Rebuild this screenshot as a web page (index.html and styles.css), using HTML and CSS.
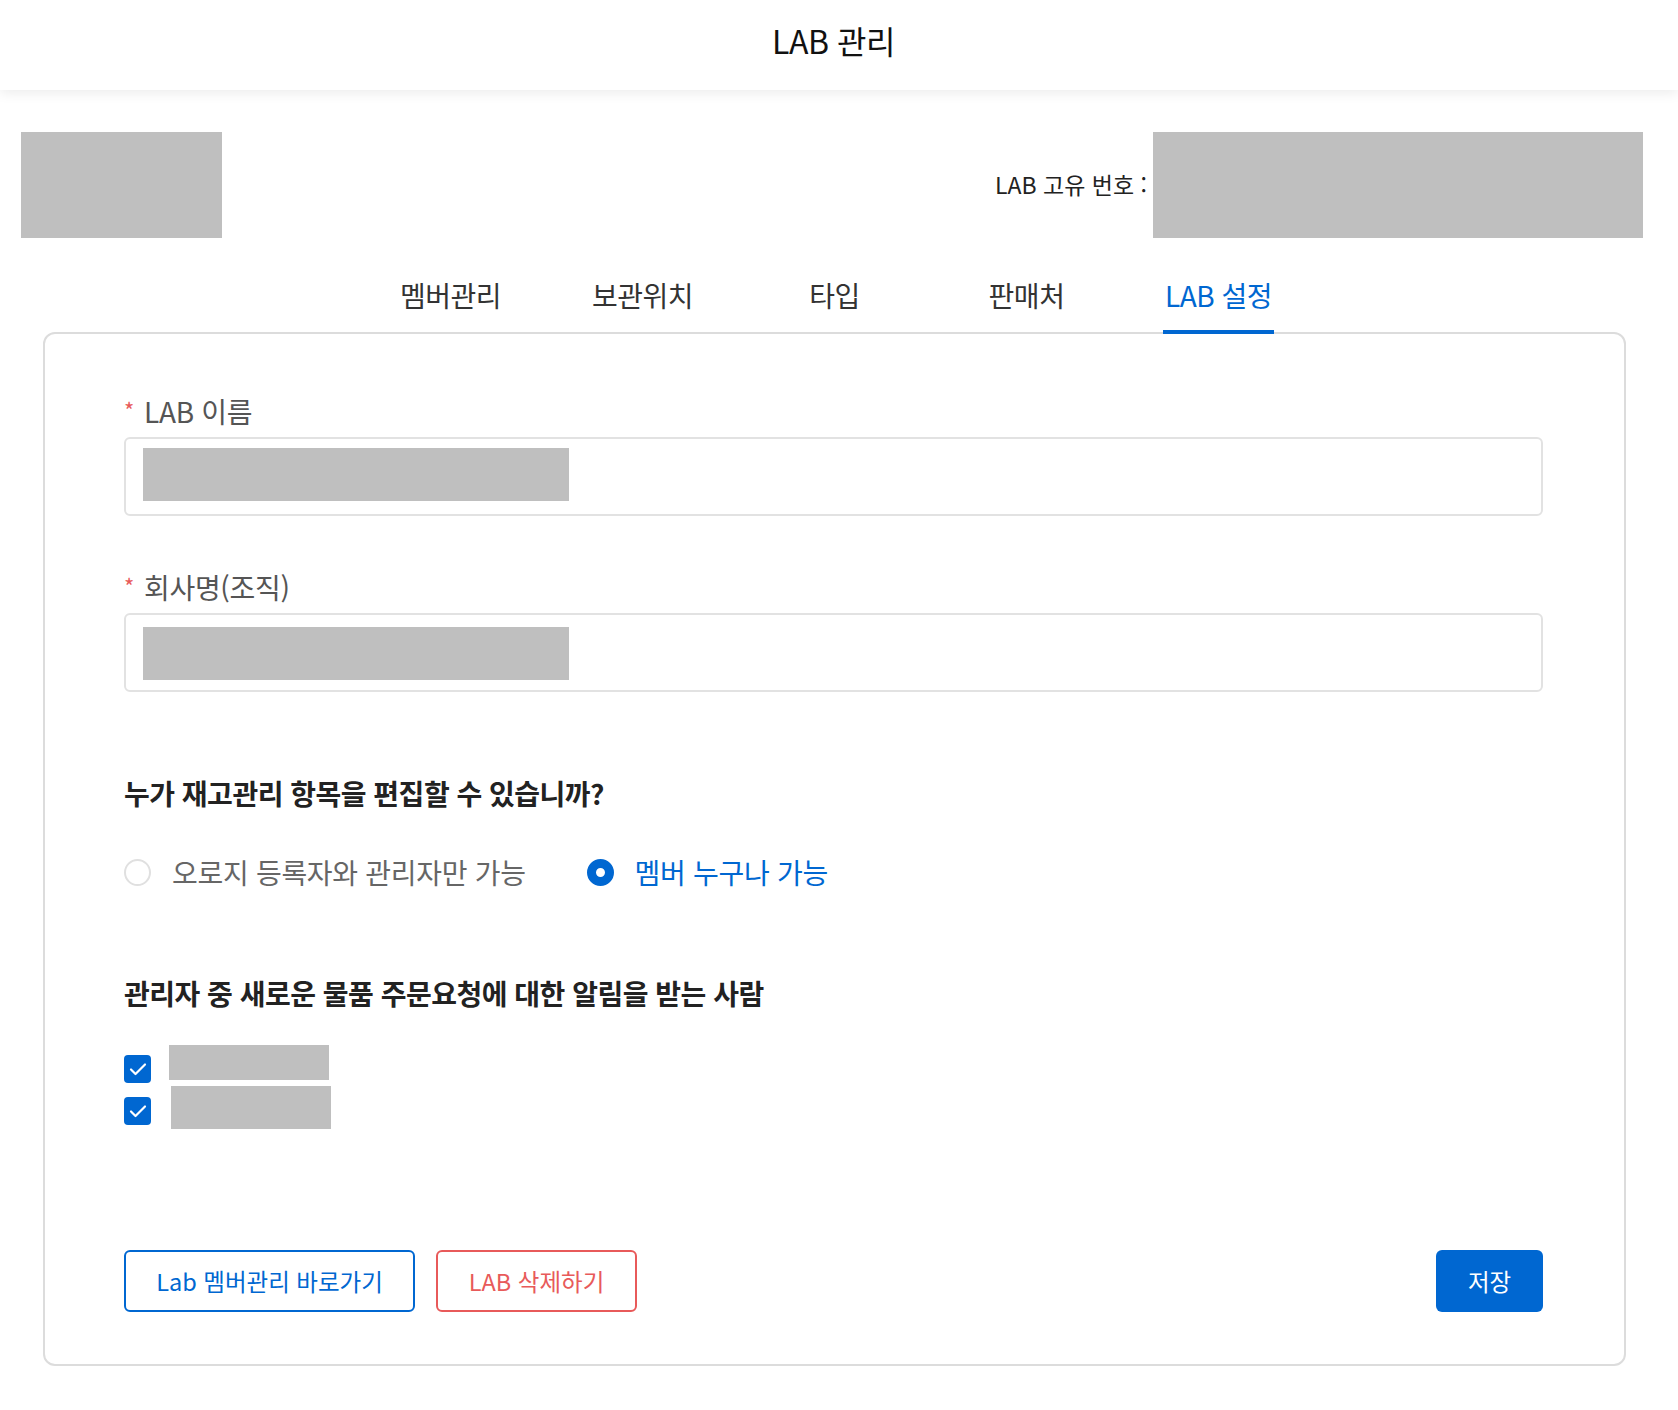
FILE: index.html
```html
<!DOCTYPE html>
<html lang="ko">
<head>
    <meta charset="UTF-8">
    <title>LAB 관리</title>
    <link rel="stylesheet" href="styles.css">
</head>
<body>
    <header class="top-bar">
        <h1>LAB 관리</h1>
    </header>

    <!-- LAB 정보 -->
    <div class="lab-info">
        <div class="lab-logo masked"></div>
        <div class="lab-code">
            <span class="lab-code-label">LAB 고유 번호 :</span>
            <div class="lab-code-value masked"></div>
        </div>
    </div>

    <!-- 탭 -->
    <nav class="tabs">
        <div class="tab"><span>멤버관리</span></div>
        <div class="tab"><span>보관위치</span></div>
        <div class="tab"><span>타입</span></div>
        <div class="tab"><span>판매처</span></div>
        <div class="tab active"><span>LAB 설정</span></div>
    </nav>

    <div class="card">
        <div class="field">
            <label class="field-label"><span class="req">*</span>LAB 이름</label>
            <div class="input-box"><div class="input-value masked"></div></div>
        </div>

        <div class="field">
            <label class="field-label"><span class="req">*</span>회사명(조직)</label>
            <div class="input-box second"><div class="input-value masked"></div></div>
        </div>

        <h2 class="question">누가 재고관리 항목을 편집할 수 있습니까?</h2>
        <div class="radio-group">
            <label class="radio"><span class="radio-dot"></span>오로지 등록자와 관리자만 가능</label>
            <label class="radio checked"><span class="radio-dot"></span>멤버 누구나 가능</label>
        </div>

        <h2 class="question notify">관리자 중 새로운 물품 주문요청에 대한 알림을 받는 사람</h2>
        <div class="check-list">
            <div class="check-row">
                <span class="checkbox">
                    <svg width="18" height="14" viewBox="0 0 18 14"><path d="M2 7.5l4.5 4.5L16 2.5" fill="none" stroke="#fff" stroke-width="2.2" stroke-linecap="round" stroke-linejoin="round"/></svg>
                </span>
                <div class="member masked"></div>
            </div>
            <div class="check-row">
                <span class="checkbox">
                    <svg width="18" height="14" viewBox="0 0 18 14"><path d="M2 7.5l4.5 4.5L16 2.5" fill="none" stroke="#fff" stroke-width="2.2" stroke-linecap="round" stroke-linejoin="round"/></svg>
                </span>
                <div class="member tall masked"></div>
            </div>
        </div>

        <div class="actions">
            <button class="btn btn-outline">Lab 멤버관리 바로가기</button>
            <button class="btn btn-danger">LAB 삭제하기</button>
            <button class="btn btn-primary">저장</button>
        </div>
    </div>
</body>
</html>
```

FILE: styles.css
```css
/* LAB 설정 화면 */
* { box-sizing: border-box; margin: 0; padding: 0; }
body { font-family: "Noto Sans CJK KR", "Noto Sans", sans-serif; color: #222; background: #fff; padding-bottom: 45px; }

.masked { background-color: #bfbfbf; }

.top-bar { height: 90px; display: flex; align-items: center; justify-content: center; padding: 0 11px 11px 0; box-shadow: 0 3px 12px rgba(0, 0, 0, 0.08); position: relative; }
.top-bar h1 { font-size: 32px; font-weight: 400; color: #111; letter-spacing: -0.5px; }

.lab-info { display: flex; justify-content: space-between; align-items: center; margin: 42px 35px 0 21px; }
.lab-logo { width: 201px; height: 106px; }
.lab-code { display: flex; align-items: center; gap: 6px; }
.lab-code-label { font-size: 23px; color: #222; padding-bottom: 2px; }
.lab-code-value { width: 490px; height: 106px; }

.tabs { display: flex; justify-content: center; margin: 39px 52px 0 43px; position: relative; z-index: 1; }
.tab { width: 192px; text-align: center; font-size: 28px; line-height: 36px; color: #333; letter-spacing: -0.5px; }
.tab span { display: inline-block; padding: 0 2px 17px; border-bottom: 4px solid transparent; }
.tab.active { color: #0067d1; }
.tab.active span { border-bottom-color: #0067d1; }

.card { margin: -2px 52px 0 43px; border: 2px solid #dcdcdc; border-radius: 12px; padding: 57px 81px 52px 79px; }

.field + .field { margin-top: 51px; }
.field-label { display: block; font-size: 28px; line-height: 36px; color: #555; margin-bottom: 8px; letter-spacing: -0.3px; }
.req { color: #e85a5a; font-size: 22px; margin-right: 10px; vertical-align: 4px; }
.input-box { height: 79px; border: 2px solid #e2e2e2; border-radius: 6px; padding: 9px 17px; }
.input-box.second { padding-top: 12px; }
.input-value { width: 426px; height: 53px; }

.question { font-size: 28px; font-weight: 700; line-height: 36px; color: #222; margin-top: 83px; letter-spacing: -0.5px; }
.question.notify { margin-top: 85px; }

.radio-group { display: flex; gap: 61px; margin-top: 43px; }
.radio { display: flex; align-items: center; gap: 21px; font-size: 28px; line-height: 36px; color: #666; letter-spacing: -0.3px; }
.radio-dot { width: 27px; height: 27px; border-radius: 50%; border: 2px solid #e0e0e0; background: #fff; }
.radio.checked { color: #0067d1; }
.radio.checked .radio-dot { border: 9px solid #0067d1; }

.check-list { margin-top: 34px; display: flex; flex-direction: column; gap: 3px; }
.check-row { display: flex; align-items: flex-start; gap: 18px; }
.checkbox { width: 27px; height: 28px; margin-top: 10px; border-radius: 4px; background: #0067d1; display: flex; align-items: center; justify-content: center; }
.check-row + .check-row .checkbox { margin-top: 11px; }
.member { width: 160px; height: 35px; }
.member.tall { height: 43px; margin-left: 2px; }

.actions { display: flex; gap: 21px; margin-top: 121px; }
.btn { height: 62px; border-radius: 6px; font-family: inherit; font-size: 23.5px; background: #fff; cursor: pointer; }
.btn-outline { width: 291px; border: 2px solid #0067d1; color: #0067d1; }
.btn-danger { width: 201px; border: 2px solid #e85a5a; color: #e85a5a; }
.btn-primary { width: 107px; margin-left: auto; border: none; background: #0067d1; color: #fff; }
```
